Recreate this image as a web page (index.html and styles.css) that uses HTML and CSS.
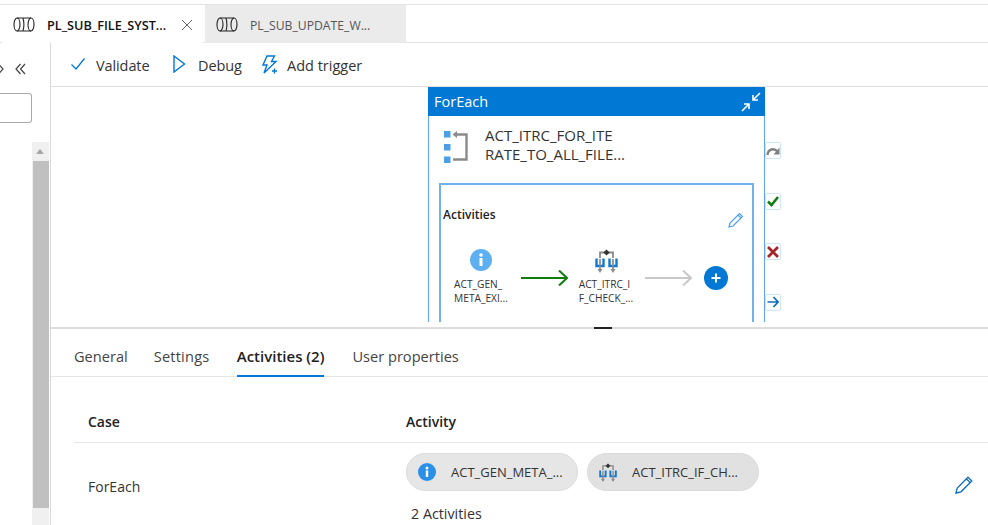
FILE: index.html
```html
<!DOCTYPE html>
<html lang="en">
<head>
  <meta charset="UTF-8">
  <meta name="viewport" content="width=device-width, initial-scale=1.0">
  <title>Pipeline</title>
  <link rel="stylesheet" href="styles.css">
</head>
<body>
  <svg class="defs" width="0" height="0">
    <symbol id="pipe" viewBox="0 0 22 15">
      <g fill="none" stroke="#222" stroke-width="1.100">
        <ellipse cx="4" cy="7.500" rx="3" ry="6.500"/>
        <ellipse cx="18" cy="7.500" rx="3" ry="6.500"/>
        <path d="M4 1h14M4 14h14M10 1.500c1.200 3 1.200 9 0 12"/>
      </g>
    </symbol>
    <symbol id="branch" viewBox="0 0 23 24">
      <path d="M5 9V3.500h13V9" fill="none" stroke="#8a8a8a" stroke-width="1.800"/>
      <rect x="9.300" y="1.300" width="4.400" height="4.400" fill="#333" transform="rotate(45 11.500 3.500)"/>
      <path d="M1.500 9.500v7.500h7V9.500M14.500 9.500v7.500h7V9.500" fill="none" stroke="#0f78d4" stroke-width="2.400"/>
      <path d="M5 10v12M18 10v12" stroke="#8a8a8a" stroke-width="1.700"/>
      <path d="M2.500 20L5 24l2.500-4zM15.500 20l2.500 4 2.500-4z" fill="#8a8a8a"/>
    </symbol>
  </svg>

  <div class="tabbar">
    <div class="tab tab-active">
      <svg class="pipe-icon" width="22" height="15"><use href="#pipe"/></svg>
      <span class="tab-name">PL_SUB_FILE_SYST...</span>
      <svg class="tab-close" viewBox="0 0 10 10" width="10" height="10"><path d="M0 0l10 10M10 0L0 10" stroke="#666" stroke-width="1" fill="none"/></svg>
    </div>
    <div class="tab">
      <svg class="pipe-icon" width="22" height="15"><use href="#pipe"/></svg>
      <span class="tab-name">PL_SUB_UPDATE_W...</span>
    </div>
  </div>

  <div class="main">
    <aside class="rail">
      <div class="rail-top">
        <svg class="rail-cut" viewBox="0 0 11 12" width="11" height="12"><path d="M1 1l4.500 5L1 11M5.500 1L10 6l-4.500 5" fill="none" stroke="#444" stroke-width="1.200"/></svg>
        <svg viewBox="0 0 11 12" width="11" height="12"><path d="M5.500 1L1 6l4.500 5M10 1L5.500 6l4.500 5" fill="none" stroke="#444" stroke-width="1.200"/></svg>
      </div>
      <div class="rail-input"></div>
      <div class="scrollbar">
        <div class="scroll-up"></div>
        <div class="scroll-thumb"></div>
      </div>
    </aside>

    <div class="workspace">
      <div class="toolbar">
        <div class="tool tool-validate">
          <svg viewBox="0 0 14 12" width="14" height="12"><path d="M0.500 6.500L5 11 13.500 0.500" fill="none" stroke="#0078d4" stroke-width="1.300"/></svg>
          Validate
        </div>
        <div class="tool tool-debug">
          <svg viewBox="0 0 13 18" width="13" height="18"><path d="M1 1l10.500 8L1 17z" fill="none" stroke="#0078d4" stroke-width="1.400"/></svg>
          Debug
        </div>
        <div class="tool tool-trigger">
          <svg viewBox="0 0 16 19" width="16" height="19"><path d="M5 1h7.500L9.500 6.500H14L2 18l3-8H1z" fill="none" stroke="#0078d4" stroke-width="1.400"/><path d="M12.500 13.500v5M10 16h5" stroke="#0078d4" stroke-width="1.400"/></svg>
          Add trigger
        </div>
      </div>

      <div class="canvas">
        <div class="node">
          <div class="node-head">
            <span>ForEach</span>
            <svg viewBox="0 0 20 20" width="20" height="20"><path d="M19 1l-7 7M12 3v5h5M1 19l7-7M3 12h5v5" fill="none" stroke="#fff" stroke-width="1.600"/></svg>
          </div>
          <div class="node-title">
            <svg viewBox="0 0 24 32" width="24" height="32"><g fill="#4a9fe8"><rect x="0" y="0" width="6.500" height="6.500"/><rect x="0" y="13" width="6.500" height="6.500"/><rect x="0" y="25.500" width="6.500" height="6.500"/></g><path d="M11 3.500h11.500v25H9" fill="none" stroke="#8a8a8a" stroke-width="2.400"/><path d="M13 0L8.500 3.500 13 7z" fill="#8a8a8a"/></svg>
            <div class="node-name">ACT_ITRC_FOR_ITE<br>RATE_TO_ALL_FILE...</div>
          </div>
          <div class="inner">
            <div class="inner-label">Activities</div>
            <svg class="inner-edit" viewBox="0 0 16 16" width="16" height="16"><path d="M1 15l1-4L11.500 1.500l3 3L5 14zM10 3l3 3" fill="none" stroke="#4a9fe8" stroke-width="1.200"/></svg>
            <div class="flow">
              <div class="act act-first">
                <svg class="info" viewBox="0 0 22 22" width="22" height="22"><circle cx="11" cy="11" r="11" fill="#5cb0f2"/><rect x="9.500" y="9" width="3" height="8" fill="#fff"/><circle cx="11" cy="6" r="1.800" fill="#fff"/></svg>
                <div class="act-name">ACT_GEN_<br>META_EXI...</div>
              </div>
              <svg class="arrow" viewBox="0 0 47 16" width="47" height="16"><path d="M0 8h46M38 0.500l8 7.500-8 7.500" fill="none" stroke="#107c10" stroke-width="2"/></svg>
              <div class="act act-second">
                <svg class="branch" width="23" height="24"><use href="#branch"/></svg>
                <div class="act-name">ACT_ITRC_I<br>F_CHECK_...</div>
              </div>
              <svg class="arrow arrow-next" viewBox="0 0 47 16" width="47" height="16"><path d="M0 8h46M38 0.500l8 7.500-8 7.500" fill="none" stroke="#c8c8c8" stroke-width="2"/></svg>
              <svg class="add" viewBox="0 0 24 24" width="24" height="24"><circle cx="12" cy="12" r="12" fill="#0078d4"/><path d="M12 7.500v9M7.500 12h9" stroke="#fff" stroke-width="2"/></svg>
            </div>
          </div>
        </div>
        <div class="side-icons">
          <div class="side-icon"><svg viewBox="0 0 14 12" width="14" height="12"><path d="M1.500 10C2 4 8 2.500 11.500 6.500" fill="none" stroke="#808080" stroke-width="2.400"/><path d="M13.500 2.500v7h-6z" fill="#808080"/></svg></div>
          <div class="side-icon"><svg viewBox="0 0 12 12" width="12" height="12"><path d="M1 6.500L4.500 10 11 2" fill="none" stroke="#107c10" stroke-width="2.600"/></svg></div>
          <div class="side-icon"><svg viewBox="0 0 12 12" width="12" height="12"><path d="M1 1l10 10M11 1L1 11" fill="none" stroke="#a4262c" stroke-width="2.800"/></svg></div>
          <div class="side-icon"><svg viewBox="0 0 12 12" width="12" height="12"><path d="M0.500 6h10.500M6.500 1L11 6l-4.500 5" fill="none" stroke="#0f6cbd" stroke-width="1.700"/></svg></div>
        </div>
      </div>

      <div class="splitter"><span class="grip"></span></div>

      <div class="panel">
        <div class="panel-tabs">
          <div class="panel-tab">General</div>
          <div class="panel-tab tab-settings">Settings</div>
          <div class="panel-tab panel-tab-active">Activities (2)</div>
          <div class="panel-tab tab-user">User properties</div>
        </div>
        <div class="table">
          <div class="table-head">
            <div class="col-case">Case</div>
            <div class="col-activity">Activity</div>
          </div>
          <div class="table-row">
            <div class="col-case case-name">ForEach</div>
            <div class="col-activity">
              <div class="pills">
                <div class="pill">
                  <svg viewBox="0 0 18 18" width="18" height="18"><circle cx="9" cy="9" r="9" fill="#2a8fe6"/><rect x="7.800" y="7.500" width="2.400" height="6.500" fill="#fff"/><circle cx="9" cy="5" r="1.500" fill="#fff"/></svg>
                  <span>ACT_GEN_META_...</span>
                </div>
                <div class="pill pill-dark">
                  <svg width="18" height="19"><use href="#branch"/></svg>
                  <span>ACT_ITRC_IF_CH...</span>
                </div>
              </div>
              <div class="count">2 Activities</div>
            </div>
            <svg class="row-edit" viewBox="0 0 18 18" width="18" height="18"><path d="M1 17l1.200-5L13 1.200l3.800 3.800L6 15.800zM11.500 3l3.500 3.500" fill="none" stroke="#0f6cbd" stroke-width="1.300"/></svg>
          </div>
        </div>
      </div>
    </div>
  </div>
</body>
</html>
```

FILE: styles.css
```css
* {
  box-sizing: border-box;
}

body {
  margin: 0;
  height: 525px;
  overflow: hidden;
  background-color: #fff;
  color: #333;
  font-family: "Open Sans", "Noto Sans", sans-serif;
  font-size: 14px;
}

.defs {
  display: block;
  height: 0;
}

/* top tabs */
.tabbar {
  display: flex;
  gap: 2px;
  height: 39px;
  margin-top: 4px;
  padding-left: 2px;
  border-top: 1px solid #e4e4e4;
  border-bottom: 1px solid #e0e0e0;
}

.tab {
  display: flex;
  align-items: center;
  width: 201px;
  height: 38px;
  padding: 2px 0 0 11px;
  background-color: #ebebeb;
  color: #555;
  font-size: 12.200px;
}

.tab-active {
  background-color: #fff;
  color: #111;
  font-size: 12.700px;
  font-weight: 600;
}

.pipe-icon {
  flex: none;
  margin-top: -2px;
  margin-right: 12px;
}

.tab-close {
  margin: -1px 0 0 16px;
}

/* left rail */
.main {
  display: flex;
  height: 482px;
}

.rail {
  flex: none;
  width: 51px;
  border-right: 1px solid #d8d8d8;
}

.rail-top {
  display: flex;
  gap: 11px;
  height: 50px;
  padding-top: 20px;
  overflow: hidden;
}

.rail-cut {
  margin-left: -7px;
}

.rail-input {
  width: 32px;
  height: 30px;
  border: 1px solid #aaa;
  border-left: none;
  border-radius: 0 3px 3px 0;
}

.scrollbar {
  width: 17px;
  height: 383px;
  margin: 19px 0 0 32px;
  padding-top: 7px;
  background-color: #f0f0f0;
}

.scroll-up {
  width: 0;
  margin-left: 4px;
  border-left: 4px solid transparent;
  border-right: 4px solid transparent;
  border-bottom: 5px solid #a6a6a6;
}

.scroll-thumb {
  width: 16px;
  height: 347px;
  margin: 7px 0 0 1px;
  background-color: #c0c0c0;
}

/* toolbar */
.workspace {
  flex: 1;
  min-width: 0;
}

.toolbar {
  display: flex;
  align-items: center;
  height: 44px;
  padding: 2px 0 0 20px;
  border-bottom: 1px solid #e0e0e0;
  font-size: 14.500px;
  letter-spacing: -0.100px;
}

.tool {
  display: flex;
  align-items: center;
  gap: 11px;
  color: #333;
}

.tool svg {
  margin-top: -3px;
}

.tool-validate {
  width: 102px;
}

.tool-debug {
  gap: 12px;
  width: 89px;
}

.tool-trigger {
  gap: 9px;
  letter-spacing: 0;
}

/* canvas */
.canvas {
  position: relative;
  height: 235px;
  margin-bottom: 5px;
  overflow: hidden;
}

.node {
  position: absolute;
  left: 377px;
  top: 0;
  width: 337px;
  height: 260px;
  border: 1px solid #5ea6e6;
  border-top: none;
}

.node-head {
  display: flex;
  align-items: center;
  justify-content: space-between;
  height: 29px;
  margin: 0 -1px;
  padding: 0 4px 0 6px;
  background-color: #0078d4;
  color: #fff;
  font-size: 14.500px;
}

.node-title {
  display: flex;
  gap: 17px;
  padding: 15px 0 0 15px;
}

.node-name {
  margin-top: -5px;
  font-size: 15px;
  line-height: 19px;
}

.inner {
  position: relative;
  height: 170px;
  margin: 19px 10px 0;
  padding: 21px 2px 0;
  border: 2px solid #6fb2ec;
}

.inner-label {
  color: #222;
  font-size: 12px;
  font-weight: 600;
}

.inner-edit {
  position: absolute;
  right: 8px;
  top: 27px;
}

.flow {
  display: flex;
  align-items: flex-start;
  margin-top: 26px;
}

.act {
  display: flex;
  flex-direction: column;
  align-items: center;
  font-size: 10.200px;
  line-height: 14px;
}

.act-first {
  width: 66px;
  margin-left: 5px;
}

.act-second {
  width: 66px;
  margin-left: 5px;
}

.act-name {
  margin-top: 6px;
  color: #333;
}

.act-second .act-name {
  margin-top: 4px;
}

.arrow {
  margin: 21px 0 0 7px;
}

.arrow-next {
  margin-left: 6px;
}

.add {
  margin: 17px 0 0 12px;
}

/* handles to the right of the node */
.side-icons {
  position: absolute;
  left: 714px;
  top: 55px;
  display: flex;
  flex-direction: column;
  gap: 33.500px;
}

.side-icon {
  display: flex;
  align-items: center;
  justify-content: center;
  width: 16px;
  height: 17px;
  border: 1.500px solid #cfe4f7;
  border-radius: 2px;
}

/* bottom panel */
.splitter {
  position: relative;
  height: 2px;
  background-color: #dedede;
}

.grip {
  position: absolute;
  left: 543px;
  top: 0;
  width: 18px;
  height: 2px;
  background-color: #222;
}

.panel-tabs {
  display: flex;
  gap: 27px;
  height: 48px;
  padding: 17px 0 0 23px;
  border-bottom: 1px solid #e6e6e6;
  font-size: 14.600px;
  color: #444;
}

.panel-tab {
  height: 31px;
}

.tab-settings {
  width: 56px;
  margin-left: -1px;
  letter-spacing: 0.200px;
}

.tab-user {
  margin-left: 1px;
}

.panel-tab-active {
  color: #222;
  font-size: 15px;
  font-weight: 600;
  border-bottom: 2px solid #0078d4;
}

.table {
  margin-left: 23px;
}

.table-head {
  display: flex;
  height: 66px;
  padding-top: 35px;
  border-bottom: 1px solid #e6e6e6;
  color: #222;
  font-size: 14px;
  font-weight: 600;
}

.col-case {
  flex: none;
  width: 332px;
  padding-left: 14px;
}

.table-row {
  display: flex;
  position: relative;
  padding-top: 10px;
}

.case-name {
  padding-top: 24px;
  font-size: 14px;
}

.pills {
  display: flex;
  gap: 9px;
}

.pill {
  display: flex;
  align-items: center;
  gap: 15px;
  width: 172px;
  height: 38px;
  padding-left: 11px;
  background-color: #e6e6e6;
  border: 1px solid #dcdcdc;
  border-radius: 19px;
  color: #333;
  font-size: 13px;
}

.pill-dark {
  background-color: #e1e1e1;
}

.count {
  margin: 13px 0 0 5px;
  font-size: 14.300px;
}

.row-edit {
  position: absolute;
  right: 15px;
  top: 33px;
}
```
